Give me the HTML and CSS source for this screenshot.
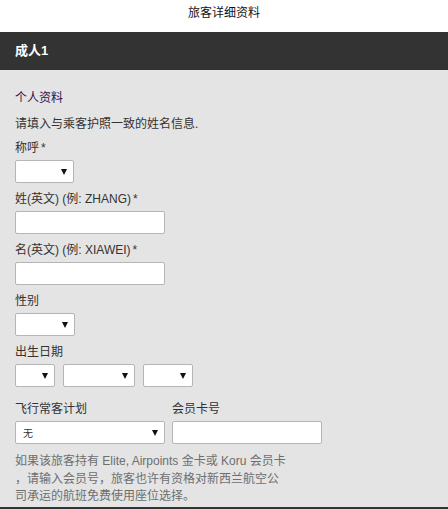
FILE: index.html
```html
<!DOCTYPE html>
<html lang="zh-CN">
<head>
<meta charset="utf-8">
<title>旅客详细资料</title>
<link rel="stylesheet" href="styles.css">
</head>
<body>
<header class="topbar">旅客详细资料</header>
<div class="pax-bar">成人1</div>
<section class="pax-form">
  <h2 class="section-title">个人资料</h2>
  <p class="intro">请填入与乘客护照一致的姓名信息.</p>

  <div class="field">
    <label class="label">称呼<span class="req">*</span></label>
    <div class="select w-title"><select></select></div>
  </div>

  <div class="field">
    <label class="label">姓(英文) (例: ZHANG)<span class="req">*</span></label>
    <input class="text-input" type="text">
  </div>

  <div class="field">
    <label class="label">名(英文) (例: XIAWEI)<span class="req">*</span></label>
    <input class="text-input" type="text">
  </div>

  <div class="field">
    <label class="label">性别</label>
    <div class="select w-gender"><select></select></div>
  </div>

  <div class="field">
    <label class="label">出生日期</label>
    <div class="dob">
      <div class="select w-day"><select></select></div>
      <div class="select w-month"><select></select></div>
      <div class="select w-year"><select></select></div>
    </div>
  </div>

  <div class="ff-row">
    <div class="field ff">
      <label class="label">飞行常客计划</label>
      <div class="select w-wide"><select><option>无</option></select></div>
    </div>
    <div class="field ff">
      <label class="label">会员卡号</label>
      <input class="text-input" type="text">
    </div>
  </div>

  <p class="help">如果该旅客持有 Elite, Airpoints 金卡或 Koru 会员卡<br>，请输入会员号，旅客也许有资格对新西兰航空公<br>司承运的航班免费使用座位选择。</p>
</section>
</body>
</html>
```

FILE: styles.css
```css
html, body {
  margin: 0;
  padding: 0;
}
body {
  background: #e4e4e4;
  font-family: "Liberation Sans", "Noto Sans CJK SC", sans-serif;
  font-size: 12px;
  color: #333;
  width: 448px;
  overflow: hidden;
}
.topbar {
  background: #fff;
  height: 32px;
  box-sizing: border-box;
  padding-top: 4px;
  line-height: 18px;
  text-align: center;
  font-size: 12px;
  color: #111;
}
.pax-bar {
  background: #333;
  color: #fff;
  height: 38px;
  line-height: 38px;
  padding-left: 15px;
  font-size: 13px;
  font-weight: bold;
}
.pax-form {
  padding: 19px 15px 1px;
  border-bottom: 3px solid #333;
}
.section-title {
  margin: 0 0 8px;
  font-size: 12px;
  font-weight: normal;
  line-height: 18px;
  color: #3a0b46;
}
.intro {
  margin: 0 0 6px;
  line-height: 18px;
}
.field {
  display: flex;
  flex-direction: column;
  align-items: flex-start;
  margin-bottom: 7px;
}
.label {
  line-height: 18px;
  margin-bottom: 3px;
}
.req {
  margin-left: 2px;
}
.text-input {
  box-sizing: border-box;
  width: 150px;
  height: 23px;
  margin: 0;
  border: 1px solid #b5b5b5;
  border-radius: 2px;
  background: #fff;
  padding: 0 6px;
  font: inherit;
}
.select {
  position: relative;
  box-sizing: border-box;
  height: 23px;
  border: 1px solid #b5b5b5;
  border-radius: 2px;
  background: #fff;
}
.select select {
  appearance: none;
  -webkit-appearance: none;
  border: 0;
  background: transparent;
  width: 100%;
  height: 100%;
  margin: 0;
  padding: 0 20px 0 7px;
  font-family: "Noto Sans CJK SC", sans-serif;
  font-size: 10px;
  color: #333;
  outline: none;
}
.select::after {
  content: "";
  position: absolute;
  right: 6px;
  top: 8px;
  border-left: 3px solid transparent;
  border-right: 3px solid transparent;
  border-top: 6px solid #111;
  pointer-events: none;
}
.w-title { width: 59px; }
.w-gender { width: 60px; }
.w-day { width: 40px; }
.w-month { width: 72px; }
.w-year { width: 50px; }
.w-wide { width: 150px; }
.dob {
  display: flex;
  gap: 8px;
}
.ff-row {
  display: flex;
  gap: 7px;
  margin-top: 13px;
}
.ff-row .field {
  margin-bottom: 0;
}
.help {
  margin: 9px 0 0;
  line-height: 17.5px;
  color: #6e6e6e;
}
```
